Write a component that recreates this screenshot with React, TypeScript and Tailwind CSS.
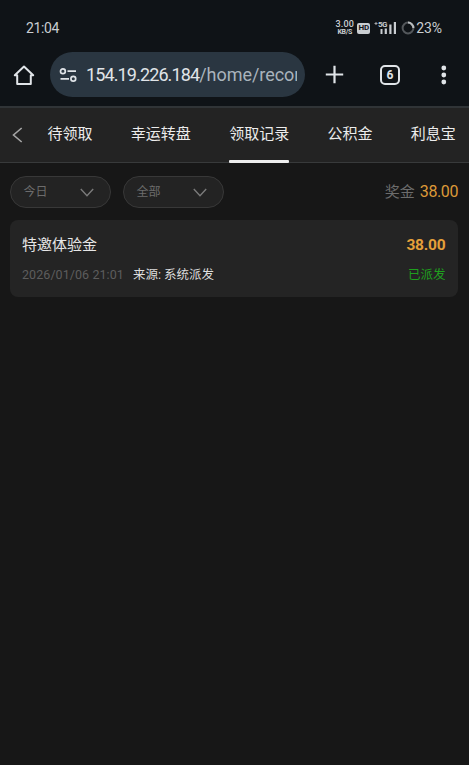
import React, { useState } from 'react';

const TABS = ['待领取', '幸运转盘', '领取记录', '公积金', '利息宝'];

const RECORDS = [
  { id: 1, title: '特邀体验金', time: '2026/01/06 21:01', source: '系统派发', amount: '38.00', status: '已派发' },
];

const StatusBar: React.FC = () => (
  <div className="flex h-[52px] items-center justify-between pt-1 pr-[27px] pl-[26px] text-[#c9cdd1]">
    <span className="text-[14px] leading-none tracking-[-0.35px]">21:04</span>
    <div className="flex items-center">
      <div className="flex w-[19px] flex-col items-center whitespace-nowrap font-medium">
        <span className="text-[9px] leading-[9px] tracking-[0.2px]">3.00</span>
        <span className="text-[7px] leading-[7px] font-bold tracking-[-0.3px]">KB/S</span>
      </div>
      <span className="ml-[3px] flex h-[11px] w-[13px] items-center justify-center rounded-[2px] bg-[#c9cdd1] text-[8px] leading-none font-bold tracking-[-0.2px] text-[#0f1317]">
        HD
      </span>
      {/* Signal bars with 5G label */}
      <svg className="ml-[4px] overflow-visible" width="23" height="14" viewBox="0 0 23 14" fill="currentColor">
        <path d="M0.5 2.1h3v1h-3zM1.5 1.1h1v3h-1z" opacity="0.8" />
        <text x="4" y="6.4" fontSize="8" fontWeight="700" textLength="9.5">5G</text>
        <path d="M6.5 8h2v5h-2zM10.7 7.5h2.2V13h-2.2zM15.3 3.5h2.2V13h-2.2zM19.8 1H22v12h-2.2z" />
      </svg>
      <svg className="ml-[4px]" width="14" height="14" viewBox="0 0 14 14" fill="none" strokeWidth="2">
        <circle cx="7" cy="7" r="5.4" stroke="#53575b" />
        <path d="M7 1.6A5.4 5.4 0 0 1 12.4 7" stroke="#b9bdc0" />
      </svg>
      <span className="ml-[1px] text-[14px] leading-none tracking-[-0.1px]">23%</span>
    </div>
  </div>
);

const BrowserBar: React.FC = () => (
  <div className="flex h-[54px] items-start text-[#e0e4e8]">
    <svg className="mt-[12px] ml-[13px] shrink-0" width="22" height="22" viewBox="0 0 22 22" fill="none" stroke="currentColor" strokeWidth="2">
      <path d="M1.8 11.2h2.4v8.8h13.6v-8.8h2.4L11 2.5z" strokeLinejoin="round" />
    </svg>
    <div className="ml-[15px] flex h-[45px] w-[255px] shrink-0 items-center rounded-full bg-[#2a3641] pr-[8px] pl-[9px]">
      <svg className="shrink-0" width="19" height="16" viewBox="0 0 19 16" fill="none" stroke="currentColor" strokeWidth="1.7">
        <circle cx="3.9" cy="4.2" r="2.4" />
        <path d="M8.5 4.2H17M1.5 11.8H10" />
        <circle cx="14.3" cy="11.8" r="2.4" />
      </svg>
      <div className="ml-[8px] min-w-0 flex-1 overflow-hidden pt-px text-[18px] leading-6 whitespace-nowrap">
        <span className="tracking-[-0.88px]">154.19.226.184</span>
        <span className="tracking-[-0.05px] text-[#a9b3bc]">/home/record</span>
      </div>
    </div>
    <svg className="mt-[13px] ml-[20px] shrink-0" width="19" height="19" viewBox="0 0 19 19" stroke="currentColor" strokeWidth="2.2">
      <path d="M9.5 .8v17.4M.8 9.5h17.4" />
    </svg>
    <div className="mt-[13px] ml-[36px] flex size-[20px] shrink-0 items-center justify-center rounded-[5px] border-2 border-current text-[12px] leading-none font-bold">
      6
    </div>
    <svg className="mt-[13px] ml-[41px] shrink-0" width="6" height="20" viewBox="0 0 6 20" fill="currentColor">
      <circle cx="2.8" cy="3" r="2.4" />
      <circle cx="2.8" cy="10" r="2.4" />
      <circle cx="2.8" cy="17" r="2.4" />
    </svg>
  </div>
);

const FilterSelect: React.FC<{ label: string }> = ({ label }) => (
  <button className="flex h-8 w-[101px] items-center justify-between rounded-full border border-[#383838] bg-[#232323] pr-[16px] pl-[12.5px] text-[12px] text-[#6c6c6c]">
    <span>{label}</span>
    <svg width="14" height="9" viewBox="0 0 14 9" fill="none" stroke="#7b7b7b" strokeWidth="1.4">
      <path d="M.8 1 7 7.7 13.2 1" />
    </svg>
  </button>
);

const App: React.FC = () => {
  const [activeTab, setActiveTab] = useState('领取记录');

  return (
    <div className="flex h-screen w-full flex-col overflow-hidden bg-[#171717] font-[Roboto,'Noto_Sans_CJK_SC',sans-serif]">
      <header className="h-[106px] shrink-0 bg-[#0f1317]">
        <StatusBar />
        <BrowserBar />
      </header>

      {/* Tabs */}
      <nav className="flex h-[57px] shrink-0 border-t-2 border-b border-t-[#303437] border-b-[#383a3b] bg-[#232323]">
        <button className="flex w-[47.5px] shrink-0 items-center pl-[12px]">
          <svg width="11" height="16" viewBox="0 0 11 16" fill="none" stroke="#a5a5a5" strokeWidth="1.6">
            <path d="M9.7 1 1.5 8l8.2 7" />
          </svg>
        </button>
        <div className="flex gap-[38.3px]">
          {TABS.map(tab => (
            <button
              key={tab}
              onClick={() => setActiveTab(tab)}
              className="-mb-px flex flex-col justify-between text-[15px] leading-[52px] whitespace-nowrap text-[#ececec]"
            >
              <span>{tab}</span>
              <span className={`h-[3px] w-full rounded-[1px] ${tab === activeTab ? 'bg-[#eeeeee]' : 'bg-transparent'}`} />
            </button>
          ))}
        </div>
      </nav>

      <main className="px-[10px] pt-[13px]">
        <div className="flex items-center">
          <FilterSelect label="今日" />
          <div className="ml-[12px]">
            <FilterSelect label="全部" />
          </div>
          <div className="mr-px ml-auto flex items-center gap-[5px] text-[15px] leading-none">
            <span className="text-[#6c6c6c]">奖金</span>
            <span className="text-[16px] tracking-[-0.4px] text-[#dd9a38]">38.00</span>
          </div>
        </div>

        {/* Record list */}
        <div className="mt-[12px] mr-px flex flex-col">
          {RECORDS.map(record => (
            <div key={record.id} className="flex h-[77px] justify-between rounded-lg bg-[#242424] pt-[13px] pr-[12.5px] pl-[12px]">
              <div className="flex flex-col">
                <span className="text-[15px] leading-6 text-[#e6e6e6]">{record.title}</span>
                <div className="mt-[8px] flex items-center gap-[9px] text-[12.5px] leading-5">
                  <span className="tracking-[0.07px] text-[#5d5d5d]">{record.time}</span>
                  <span className="text-[#dedede]">来源: {record.source}</span>
                </div>
              </div>
              <div className="flex flex-col items-end">
                <span className="text-[15.5px] leading-6 font-bold tracking-[-0.2px] text-[#e5a03a]">{record.amount}</span>
                <span className="mt-[8px] text-[12.5px] leading-5 text-[#1fa01e]">{record.status}</span>
              </div>
            </div>
          ))}
        </div>
      </main>
    </div>
  );
};

export default App;
